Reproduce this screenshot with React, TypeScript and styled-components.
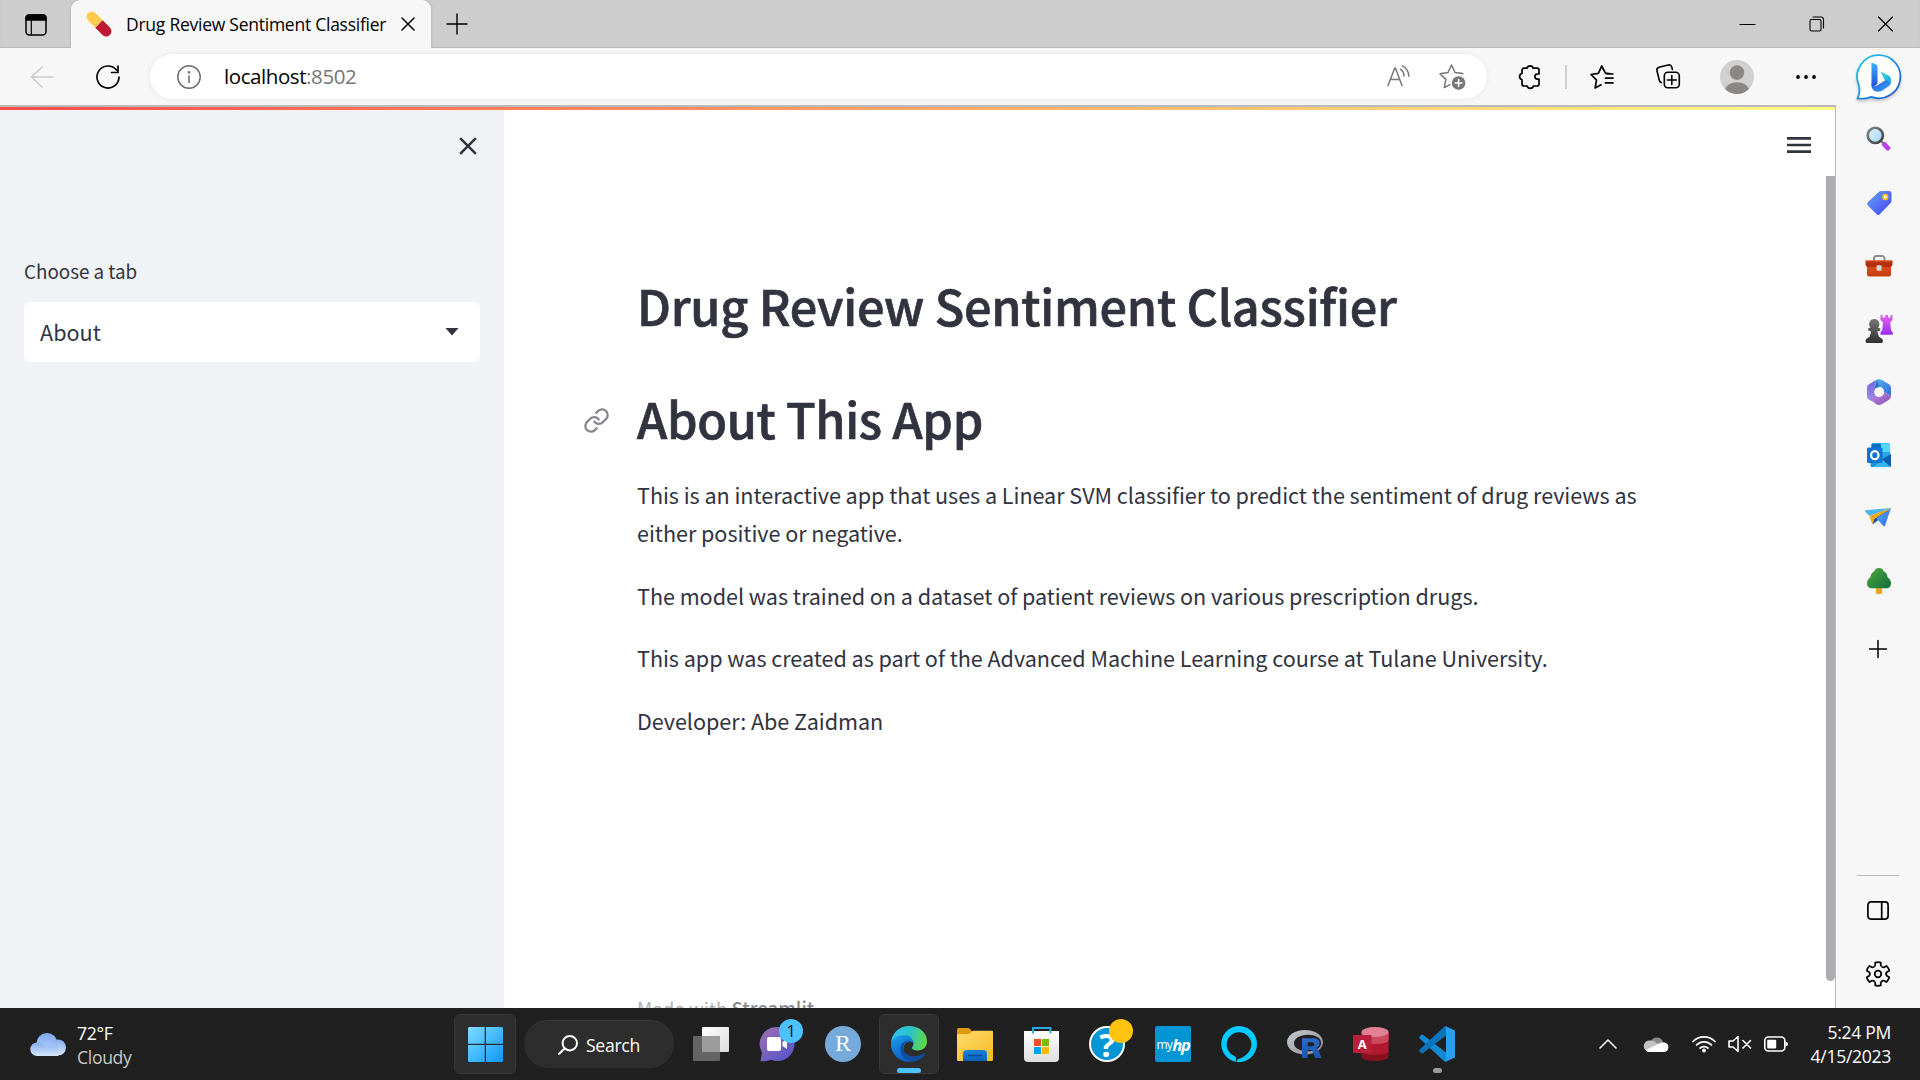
import React from "react";
import styled, { createGlobalStyle } from "styled-components";
import { MdClose, MdMenu } from "react-icons/md";
import { Link as LinkIcon } from "lucide-react";

const SANS = '"Noto Sans CJK JP", "Open Sans", sans-serif';
const UI = '"Open Sans", "Noto Sans", sans-serif';
const INK = "#31333f";

const Global = createGlobalStyle`
  * { box-sizing: border-box; }
  body { margin: 0; overflow: hidden; background: #fff; }
  h1, p { margin: 0; }
  svg { display: block; flex: none; overflow: visible; }
`;

const Screen = styled.div`
  width: 1920px; height: 1080px; display: flex; flex-direction: column;
  font-family: ${UI}; color: #000; overflow: hidden;
`;
const TabStrip = styled.header`
  height: 48px; background: #cdcdcd; display: flex; align-items: center;
  box-shadow: inset 0 -1px 1px #b9b9b9;
`;
const Workspaces = styled.div`
  width: 71px; padding: 1px 0 0 1px; display: flex; justify-content: center;
`;
const Tab = styled.div`
  width: 360px; height: 48px; background: #f7f7f7; border-radius: 9px 9px 0 0;
  display: flex; align-items: center; padding-left: 16px; box-shadow: 0 0 3px #aaa;
  clip-path: inset(0 -4px 0 -4px);
`;
const TabTitle = styled.span`
  width: 290px; flex: none; padding: 0 0 1px 15px; font-size: 17.5px; white-space: nowrap; letter-spacing: -0.25px;
`;
const NewTab = styled.div`margin: 0 0 1px 15px;`;
const WindowButtons = styled.div`
  margin-left: auto; display: flex; gap: 54px; padding-right: 27px;
`;
const Middle = styled.div`height: 960px; display: flex;`;
const Browser = styled.div`width: 1836px; display: flex; flex-direction: column;`;
const Toolbar = styled.div`
  height: 57px; background: #f7f7f7; display: grid; align-items: center; justify-items: center;
  grid-template-columns: 84px 48px 18px 1337px 78px 2px 70px 62px 76px 61px;
`;
const AddressBar = styled.div`
  grid-column: 4; width: 100%; height: 45px; border-radius: 23px; background: #fff;
  box-shadow: 0 0 5px #e4e4e4; display: flex; align-items: center; padding: 0 21px 0 27px;
`;
const Url = styled.span`
  margin-left: 23px; padding-bottom: 2px; font-size: 20.5px; letter-spacing: -0.42px; flex: 1;
  em { font-style: normal; color: #767676; }
`;
const Extensions = styled.div`padding-left: 6px;`;
const Divider = styled.i`width: 2px; height: 24px; background: #cfcfcf;`;
const ReadAloud = styled.div`margin: 0 29px 2px 0;`;

const Page = styled.div`
  flex: 1; display: flex; flex-direction: column; border-top: 2px solid #bababa;
  border-right: 1px solid #b9b9bb; background: #fff; overflow: hidden;
`;
const Decoration = styled.div`
  height: 3px; flex: none; background: linear-gradient(90deg, #ff4b4b, #fffd80);
`;
const AppView = styled.div`flex: 1; display: flex; min-height: 0;`;
const SideNav = styled.aside`
  width: 504px; background: #f0f2f6; padding: 21px 24px 0; font-family: ${SANS}; color: ${INK};
`;
const CloseRow = styled.div`
  display: flex; justify-content: flex-end; height: 129px; margin-right: -3px;
`;
const FieldLabel = styled.div`
  font-size: 18.8px; line-height: 21px; height: 42px; white-space: nowrap;
`;
const Select = styled.div`
  height: 60px; border-radius: 6px; background: #fff; display: flex; align-items: center;
  justify-content: space-between; padding: 0 21px 0 16px; font-size: 21.6px;
`;
const SelectValue = styled.span`padding-bottom: 2px;`;
const Main = styled.main`
  flex: 1; display: flex; color: ${INK}; font-family: ${SANS}; min-width: 0;
`;
const Column = styled.div`
  width: 1189px; padding: 163px 0 0 133px; display: flex; flex-direction: column; flex: none;
`;
const HeadingRow = styled.div`
  display: flex; align-items: center; margin-left: -54px; height: 65px; margin-bottom: 48px;
`;
const Anchor = styled.span`width: 54px; color: #85868c; padding-top: 3px;`;
const Heading = styled.h1<{ $ls: number }>`
  font-size: 48.6px; line-height: 65px; font-weight: 500; white-space: nowrap;
  -webkit-text-stroke: 0.7px ${INK}; letter-spacing: ${(p) => p.$ls}px;
`;
const Prose = styled.div`
  margin-top: -23px; display: flex; flex-direction: column; gap: 24px; font-size: 21.6px;
  line-height: 38.4px; width: 1030px; letter-spacing: -0.045px;
`;
const Footer = styled.footer`
  margin-top: 253px; font-size: 18.7px; line-height: 30px; color: #b0b1b5; white-space: nowrap;
  b { font-weight: 500; color: #8a8b92; }
`;
const MenuColumn = styled.div`
  flex: 1; display: flex; flex-direction: column; align-items: flex-end; justify-content: space-between;
  padding: 19px 0 27px;
`;
const MenuButton = styled.div`padding-right: 20px; height: 47px;`;
const ScrollThumb = styled.div`
  width: 9px; height: 805px; background: #adacb2; border-radius: 0 0 5px 5px;
`;

const Rail = styled.aside`
  width: 84px; background: #f7f7f7; display: flex; flex-direction: column; padding-bottom: 3px;
`;
const RailItem = styled.div<{ $h?: number; $shift?: number }>`
  height: ${(p) => p.$h ?? 63}px; flex: none; display: flex; align-items: center; justify-content: center;
  padding-left: ${(p) => p.$shift ?? 2}px;
`;
const RailGap = styled.div`height: 3px;`;
const RailRule = styled.div`
  margin: auto 21px 3px; height: 1px; background: #bcbcbc;
`;

const Taskbar = styled.footer`
  height: 72px; background: #202020; display: flex; align-items: center; color: #fff; font-size: 17.6px;
`;
const Weather = styled.div`
  width: 454px; padding: 1px 0 0 30px; display: flex; align-items: center; gap: 11px;
`;
const Lines = styled.div<{ $right?: boolean }>`
  line-height: 24px; letter-spacing: -0.32px; text-align: ${(p) => (p.$right ? "right" : "left")};
  span { display: block; white-space: nowrap; }
  .soft { color: #c8c8c8; }
`;
const StartButton = styled.div`
  width: 62px; height: 60px; border-radius: 6px; background: #2d2d2d; border: 1px solid #383838;
  display: flex; align-items: center; justify-content: center;
`;
const SearchPill = styled.div`
  width: 150px; height: 48px; margin: 0 4px 0 8px; border-radius: 24px; background: #2d2d2d;
  border-top: 1px solid #3a3a3a; display: flex; align-items: center; padding-left: 34px; gap: 8px;
  letter-spacing: -0.3px;
`;
const TaskSlot = styled.div<{ $active?: boolean }>`
  position: relative; width: 60px; height: 60px; margin: 0 3px; border-radius: 6px;
  display: flex; align-items: center; justify-content: center;
  background: ${(p) => (p.$active ? "#2d2d2d" : "none")};
  border: 1px solid ${(p) => (p.$active ? "#383838" : "transparent")};
`;
const RunMark = styled.i<{ $w: number; $c: string }>`
  position: absolute; bottom: 0; left: ${(p) => 29 - p.$w / 2}px; width: ${(p) => p.$w}px; height: 5px;
  border-radius: 3px; background: ${(p) => p.$c};
`;
const Badge = styled.b<{ $c: string }>`
  position: absolute; top: 4px; left: 31px; width: 24px; height: 24px; border-radius: 12px;
  background: ${(p) => p.$c}; color: #111; font-weight: 400; line-height: 24px; text-align: center; font-size: 17px;
`;
const RStudio = styled.div`
  width: 36px; height: 36px; border-radius: 18px; background: #75aadb; color: #fff;
  font: 24px/35px "Liberation Serif", serif; text-align: center;
`;
const HelpDisc = styled.div`
  width: 36px; height: 36px; border-radius: 18px; background: #0096d6; border: 2px solid #fff;
  font: 700 33px/33px "Open Sans", sans-serif; text-align: center;
`;
const MyHp = styled.div`
  width: 36px; height: 36px; border-radius: 2px; background: #0096d6; display: flex; justify-content: center;
  align-items: center; font-size: 12px; letter-spacing: -0.7px;
  b { font-size: 16.5px; font-style: italic; letter-spacing: -1.2px; }
`;
const Tray = styled.div`
  margin-left: auto; display: flex; align-items: center; padding-right: 29px;
`;
const TrayItem = styled.div<{ $ml: number }>`margin-left: ${(p) => p.$ml}px;`;
const Clock = styled.div`width: 80px; margin-left: 23px; display: flex; justify-content: flex-end;`;

type LineProps = { w: number; h: number; d: string; c?: string; s?: number };
const Stroke = ({ w, h, d, c = "#000", s = 1.5 }: LineProps) => (
  <svg width={w} height={h} viewBox={`0 0 ${w} ${h}`} fill="none" stroke={c} strokeWidth={s} strokeLinecap="round" strokeLinejoin="round">
    <path d={d} />
  </svg>
);

const WorkspaceIcon = () => (
  <svg width="22" height="22" viewBox="0 0 22 22" fill="none" stroke="#000" strokeWidth="1.5">
    <rect x="1" y="1" width="20" height="20" rx="3.5" />
    <path d="M1 6V4a3 3 0 0 1 3-3h14a3 3 0 0 1 3 3v2z" fill="#000" />
    <path d="M6.3 6v15" strokeWidth="1.2" />
  </svg>
);
const Pill = () => (
  <svg width="24" height="24" viewBox="0 0 24 24">
    <g transform="rotate(45 12 12)">
      <path d="M12 6.8H1.8a5.2 5.2 0 0 0 0 10.4H12z" fill="#ffcc4d" />
      <path d="M12 6.8h10.2a5.2 5.2 0 0 1 0 10.4H12z" fill="#be1931" />
    </g>
  </svg>
);
const InfoIcon = () => (
  <svg width="24" height="24" viewBox="0 0 24 24" fill="none" stroke="#6b6b6b" strokeWidth="1.5">
    <circle cx="12" cy="12" r="11.2" />
    <path d="M12 10.5V18" />
    <circle cx="12" cy="7.3" r=".6" fill="#6b6b6b" />
  </svg>
);
const ReadIcon = () => (
  <svg width="23" height="22" viewBox="0 0 23 22" fill="none" stroke="#767676" strokeWidth="1.5" strokeLinecap="round" strokeLinejoin="round">
    <path d="M1 20.5 7.8 3h.6l6.6 17.5M3.3 14.6h9.5M13.4 4.2a8 8 0 0 1 3.6 6.8M15.6.8a13 13 0 0 1 6.3 10.4" />
  </svg>
);
const StarAdd = () => (
  <svg width="27" height="26" viewBox="0 0 27 26" fill="none" stroke="#767676" strokeWidth="1.5" strokeLinejoin="round" strokeLinecap="round">
    <path d="M23.8 9.6 16 8.5 12.5 1 9 8.5 1 9.7l5.8 5.7-1.5 8.2 5.5-2.9" />
    <circle cx="19.6" cy="19" r="6.8" fill="#767676" stroke="none" />
    <path d="M19.6 15.6v6.8M16.2 19H23" stroke="#fff" />
  </svg>
);
const Puzzle = () => (
  <Stroke w={22} h={25} s={1.7} d="M6 4.200h3a3.200 3.200 0 0 1 6.200 0H19a2 2 0 0 1 2 2V10h-1.500a2.600 2.600 0 0 0 0 5.200H21V20a2 2 0 0 1-2 2h-3.600a3.200 3.200 0 0 1-6.200 0H6a2 2 0 0 1-2-2v-4.300a3.200 3.200 0 0 1 0-6.200V6.200a2 2 0 0 1 2-2Z" />
);
const FavLines = () => (
  <Stroke w={24} h={24} s={1.7} d="M22.5 9 15.5 8.2 11.7 1 8.4 8.4 1 9.5l5.5 5.6-1.4 7.9 6-3.2M15.5 13.200H23M15.5 17.900H23M17 9H22.8" />
);
const Collections = () => (
  <svg width="24" height="25" viewBox="0 0 24 25" fill="none" stroke="#000" strokeWidth="1.6" strokeLinecap="round">
    <path d="M5.3 18.6a3 3 0 0 1-2-2.4L1 7a3 3 0 0 1 2-3.7L12 1a3 3 0 0 1 3.8 2.2l.5 2.2" />
    <rect x="8.3" y="8.3" width="15" height="15.4" rx="3.5" />
    <path d="M15.8 11.5v9M11.3 16h9" />
  </svg>
);
const Avatar = () => (
  <svg width="34" height="34" viewBox="0 0 34 34">
    <circle cx="17" cy="17" r="17" fill="#d2d0ce" />
    <circle cx="17" cy="12.6" r="7.3" fill="#8a8886" />
    <path d="M5 29a12.5 9.4 0 0 1 24 0 17 17 0 0 1-24 0z" fill="#8a8886" />
  </svg>
);
const Dots = () => (
  <svg width="20" height="4" viewBox="0 0 20 4"><circle cx="2" cy="2" r="1.9" /><circle cx="10" cy="2" r="1.9" /><circle cx="18" cy="2" r="1.9" /></svg>
);

const Grad = ({ id, a, b, v }: { id: string; a: string; b: string; v?: boolean }) => (
  <linearGradient id={id} x1="0" y1="0" x2={v ? "0" : "1"} y2="1"><stop stopColor={a} /><stop offset="1" stopColor={b} /></linearGradient>
);

const BingShape = styled.path`filter: drop-shadow(0 2px 1.5px #0003);`;
const Bing = () => (
  <svg width="46" height="46" viewBox="0 0 46 46">
    <defs><Grad id="bo" a="#1fd0ee" b="#1b4fd8" /><Grad id="bb" a="#37b1ff" b="#2151e0" v /><Grad id="bc" a="#36e0d0" b="#1b9df0" /><Grad id="bd" a="#2151e0" b="#35a8f5" /></defs>
    <BingShape d="M23.5 1.2a21.5 21.5 0 1 1-8.2 41.6c-4 1.7-8.500 2-13.700 1.900 2-5 2.400-9 1.400-13A21.600 21.600 0 0 1 23.500 1.200z" fill="#fff" stroke="url(#bo)" strokeWidth="1.8" />
    <path d="M15.500 28v4.500c1 5 6 6.500 10.500 4.200l7-4.700c2.500-2 2.500-6-1-7.500L21 31.500c-2.500 1.500-5.500 1-5.500-3.500z" fill="url(#bd)" />
    <path d="M15.500 8.500 20 10.500c1.200.6 1.500 1.500 1.500 2.500v16.500c-2 2.500-4.500 3.500-6 2z" fill="url(#bb)" />
    <path d="M24.500 17.500l7 3.500c4 2 4.800 6 2.500 9.500-.3-2.500-1.500-3.300-5.500-4.700z" fill="url(#bc)" />
  </svg>
);
const Magnifier = () => (
  <svg width="25" height="27" viewBox="0 0 25 27">
    <defs><Grad id="mg" a="#8b8b8b" b="#3c3c3c" /><Grad id="ml" a="#e4f5ff" b="#9cd2f5" /></defs>
    <path d="m18.300 18.300 3.600 3.800" stroke="#c239f5" strokeWidth="4.800" strokeLinecap="round" />
    <path d="m14.500 14.500 3 3" stroke="#777" strokeWidth="2" />
    <circle cx="9.300" cy="9.400" r="7.600" fill="url(#ml)" stroke="url(#mg)" strokeWidth="2.600" />
  </svg>
);
const Tag = () => (
  <svg width="25" height="24" viewBox="0 0 25 24">
    <defs><Grad id="tg" a="#66a9f8" b="#413fef" /></defs>
    <path d="M12 .8C13 0 14 0 15 0h7a2.500 2.500 0 0 1 2.500 2.500V9c0 1.500-.3 2.500-1.300 3.500L13 23a2.500 2.500 0 0 1-3.600 0l-8.500-8.500a2.500 2.500 0 0 1 0-3.600z" fill="url(#tg)" />
    <circle cx="18.300" cy="6" r="2.300" fill="#fff" stroke="#f5c21b" strokeWidth="1.800" />
  </svg>
);
const Toolbox = () => (
  <svg width="28" height="22" viewBox="0 0 28 22">
    <defs><Grad id="tb" a="#e5571d" b="#c63d10" v /></defs>
    <path d="M9 6V3.500a2.500 2.500 0 0 1 2.500-2.500h5.500a2.500 2.500 0 0 1 2.500 2.500V6" fill="none" stroke="#8c8c8c" strokeWidth="2" />
    <rect x="2" y="6" width="24" height="15.500" rx="2" fill="url(#tb)" />
    <path d="M1.500 5.500h25a1 1 0 0 1 1 1V9c0 2-1 3-3 3h-21c-2 0-3-1-3-3V6.500a1 1 0 0 1 1-1z" fill="#b52e0e" />
    <path d="M.5 6h27" stroke="#e8651f" />
    <rect x="11.600" y="10.300" width="5" height="5.400" rx="1" fill="#d5d5d5" />
  </svg>
);
const Chess = () => (
  <svg width="28" height="28" viewBox="0 0 28 28">
    <defs><Grad id="cr" a="#e163ef" b="#9b2cf3" v /><Grad id="cp" a="#777" b="#303030" v /></defs>
    <path d="M15.500 0h2v2.500h2.700V0h2.800v2.500h2.500V0h2v5l-2.300 2.500.8 7.500 1.800 2.500v2.300H15.500v-2.300l1.700-2.500.8-7.500L15.500 5z" fill="url(#cr)" />
    <path d="M9.300 4a5 5 0 0 1 3.700 8.400l2.300 1.100v2.100l-3 1 1.500 5 3.200 2.200c1 .8 1.100 2.200.7 3.400-.2.600-.7.800-1.200.8H2c-.600 0-1-.2-1.200-.8-.4-1.200-.3-2.600.7-3.400l3.200-2.200 1.500-5-3-1v-2.100l2.300-1.100A5 5 0 0 1 9.300 4z" fill="url(#cp)" />
  </svg>
);
const M365 = () => (
  <svg width="24" height="26" viewBox="0 0 24 26">
    <defs><Grad id="ma" a="#58b4f0" b="#2f6ad8" /><Grad id="mb" a="#6f66dc" b="#a78be8" v /><Grad id="mc" a="#c08ae0" b="#8450b4" /></defs>
    <path d="M9 1 2 5.200Q0 6.500 0 9v8q0 2.500 2 3.800L6.500 23 12 18q-4-1-4-5V7q0-4 1-6z" fill="url(#mb)" />
    <path d="M10 .6Q12-.3 15 1l7 4.200Q24 6.500 24 9v8l-7-4q0-4-4-5L7.500 11V6q0-4 2.500-5.400z" fill="url(#ma)" />
    <path d="M10 .6 7.500 11 12 8.300z" fill="#1d4a9c" opacity=".6" />
    <path d="M6 22.500 9 25q3 1.800 6 0l7-4.200q2-1.300 2-3.800L17 13q0 4-5 5H5.500z" fill="url(#mc)" />
    <circle cx="12" cy="13" r="4.800" fill="#f7f7f7" />
  </svg>
);
const OutlookIcon = () => (
  <svg width="24" height="24" viewBox="0 0 24 24">
    <rect x="4.500" y="0" width="18.500" height="17" rx="1.500" fill="#28a8ea" />
    <path d="M13.500.5H23v8.500h-9.500z" fill="#50d9ff" /><path d="M4.500 1H14v5H4.500z" fill="#0a6fc2" />
    <path d="M3.500 10.500 13.700 17 24 10.500V22.500a1.500 1.500 0 0 1-1.500 1.500H5a1.500 1.500 0 0 1-1.500-1.500z" fill="#1c93dc" />
    <path d="M24 11v12.500L14 17z" fill="#125fa8" /><path d="m6 24 10-7 7 7z" fill="#35b8f1" />
    <rect x="0" y="4.500" width="15.500" height="15.500" rx="1.500" fill="#0c75d1" />
    <ellipse cx="7.800" cy="12.200" rx="3.700" ry="4" fill="none" stroke="#fff" strokeWidth="2.200" />
  </svg>
);
const DropIcon = () => (
  <svg width="26" height="19" viewBox="0 0 26 19">
    <defs><Grad id="dp" a="#5bb5f5" b="#2863e5" /></defs>
    <path d="M26 0 .5 2.300Q-.5 2.800.5 4l4 4z" fill="#49b5e8" />
    <path d="M26 0 9 11l-1.500 5.500L12 13z" fill="#174fae" />
    <path d="M26 0 11.500 10.500l7 7.500q1 .7 1.500-.5z" fill="url(#dp)" />
    <path d="M26 0 4.500 8l2.800 8.200 1.700-5z" fill="#f5a418" />
  </svg>
);
const Tree = () => (
  <svg width="24" height="26" viewBox="0 0 24 26">
    <defs><Grad id="tr" a="#4faa3c" b="#106e3c" /></defs>
    <path d="M9 18h6v6.500a1.500 1.500 0 0 1-1.500 1.500h-3A1.500 1.500 0 0 1 9 24.500z" fill="#f3a01c" />
    <path d="M12 0c2.500 0 4 1.200 4.500 3 2.500 1.500 4 3.500 4 6.200C23 10.800 24 13 24 15.500c0 3-2 4.800-4.500 4.800h-15C2 20.300 0 18.500 0 15.500 0 13 1 10.800 3.500 9.200c0-2.700 1.500-4.700 4-6.200C8 1.200 9.500 0 12 0z" fill="url(#tr)" />
  </svg>
);
const PanelIcon = () => (
  <svg width="22" height="19" viewBox="0 0 22 19" fill="none" stroke="#000" strokeWidth="1.700"><rect x=".9" y=".9" width="20.200" height="17.200" rx="3" /><path d="M14.700 1v17" /></svg>
);
const Gear = () => {
  const pts: string[] = [];
  for (let i = 0; i < 6; i++) {
    const at = (deg: number, r: number) => {
      const a = ((deg + i * 60 - 90) * Math.PI) / 180;
      return `${(13 + r * Math.cos(a)).toFixed(2)} ${(13 + r * Math.sin(a)).toFixed(2)}`;
    };
    pts.push(`${i ? "L" : "M"}${at(-14, 11.7)}Q${at(0, 12.2)} ${at(14, 11.7)}L${at(17, 9.3)}Q${at(30, 7)} ${at(43, 9.3)}`);
  }
  return (
    <svg width="26" height="26" viewBox="0 0 26 26" fill="none" stroke="#000" strokeWidth="1.700" strokeLinejoin="round">
      <path d={pts.join("") + "Z"} /><circle cx="13" cy="13" r="3.300" />
    </svg>
  );
};

const WeatherCloud = () => (
  <svg width="36" height="23" viewBox="0 0 36 23">
    <defs><Grad id="w1" a="#7fa8f0" b="#b9d4f8" v /><Grad id="w2" a="#86aef0" b="#d5e6fb" v /></defs>
    <circle cx="17" cy="10.500" r="10.500" fill="url(#w1)" />
    <circle cx="28" cy="14.500" r="8" fill="url(#w2)" />
    <path d="M7 9.500c4 0 7 2 9 5l12-2.500v11H7A6.700 6.700 0 0 1 7 9.500z" fill="url(#w2)" />
  </svg>
);
const Windows = () => (
  <svg width="35" height="35" viewBox="0 0 35 35">
    <defs><linearGradient id="wn" gradientUnits="userSpaceOnUse" x1="0" y1="0" x2="35" y2="35"><stop stopColor="#7fdcff" /><stop offset="1" stopColor="#0a98f8" /></linearGradient></defs>
    <path fill="url(#wn)" d="M1 0h15.700v16.700H0V1zM18 0h16l1 1v15.700H18zM0 18h16.700v17H1l-1-1zM18 18h17v16l-1 1H18z" />
  </svg>
);
const SearchGlass = () => <Stroke w={20} h={20} c="#fff" s={2} d="M19 8.200a7.200 7.200 0 1 1-14.400 0 7.200 7.200 0 0 1 14.400 0M6.500 13.500 1 19" />;
const TaskView = () => (
  <svg width="36" height="34" viewBox="0 0 36 34">
    <defs><Grad id="tv" a="#fff" b="#dcdcdc" /></defs>
    <rect x="9" y="0" width="27" height="25" rx="1" fill="url(#tv)" /><rect x="0" y="9" width="27" height="25" rx="1" fill="#646464" />
    <path d="M9 9h18v16H9z" fill="#9c9c9c" />
  </svg>
);
const Chat = () => (
  <svg width="34" height="35" viewBox="0 0 34 35">
    <defs><Grad id="ch" a="#a06fb0" b="#4f52cf" /></defs>
    <path d="M17 0a17 17 0 1 1-6 32.700C8 34 4 34.500.5 34.300L2 25.500A17 17 0 0 1 17 0z" fill="url(#ch)" />
    <rect x="7" y="10" width="14" height="14" rx="2" fill="#fff" /><path d="m22.500 15 4.500-3v10l-4.500-3z" fill="#fff" />
  </svg>
);
const Edge = () => (
  <svg width="36" height="36" viewBox="0 0 24 24">
    <defs>
      <linearGradient id="e1" x1="0" y1=".3" x2="1" y2=".5"><stop stopColor="#2fc0f2" /><stop offset=".5" stopColor="#2bc3c9" /><stop offset="1" stopColor="#62d943" /></linearGradient>
      <linearGradient id="e2" x1="0" y1="0" x2=".5" y2="1"><stop stopColor="#1aa0e8" /><stop offset="1" stopColor="#0a5dc8" /></linearGradient>
    </defs>
    <path d="M0 12C0 5 5.400 0 12 0c7 0 12 4.500 12 10.300 0 3.500-2.700 6-6 6-2.600 0-4-.8-4-1.700 0-.6 1-1.200 1-2.900 0-2.500-2.700-4.700-6-4.700C4 7 1 9 0 12z" fill="url(#e1)" />
    <path d="M0 12C.5 8.500 4 6.200 8.600 6.200c4.400 0 6.400 2.900 6.400 5.500-.4-1.900-5.700-2.500-6.600 3C7.500 20 13 23 15.600 23.400 7.500 25.500 0 20 0 12z" fill="url(#e2)" />
    <path d="M8.200 14.600c0 3.400 3.500 5.600 7.200 5.600 3 0 5.200-1 6.500-1.900.5-.3 1 .2.700.7-1 1.700-3.400 3.900-7 4.600C10 24 5.600 19.500 6.400 14.500c.5-3 2.600-4.700 5.100-4.700-2 1-3.300 2.900-3.300 4.800z" fill="#0f4fa0" />
  </svg>
);
const Folder = () => (
  <svg width="36" height="33" viewBox="0 0 36 33">
    <defs><Grad id="fo" a="#ffdc6b" b="#f6b826" /><Grad id="fb" a="#1583dd" b="#0a62b8" v /></defs>
    <path d="M1.500 0H11q1 0 2 1l2.500 2.500V10H0V1.500A1.500 1.500 0 0 1 1.500 0z" fill="#dd9a0c" />
    <path d="M0 6h11.500q1 0 2-1l1.500-1.500q.7-.7 1.700-.7H35a1 1 0 0 1 1 1V32a1 1 0 0 1-1 1H1a1 1 0 0 1-1-1z" fill="url(#fo)" />
    <path d="M6 33v-7a4 4 0 0 1 4-4h16a4 4 0 0 1 4 4v7z" fill="url(#fb)" /><path d="M11.500 27.500h13" stroke="#0b4c98" strokeWidth="1.500" strokeLinecap="round" />
  </svg>
);
const Store = () => (
  <svg width="35" height="35" viewBox="0 0 35 35">
    <defs><Grad id="st" a="#fff" b="#dedede" v /></defs>
    <path d="M0 4h35v27a4 4 0 0 1-4 4H4a4 4 0 0 1-4-4z" fill="url(#st)" />
    <path d="M9 6.500V1h17.500v5.500" fill="none" stroke="#2aa9e4" strokeWidth="2" />
    <path d="M10 12h7v7h-7z" fill="#f25022" /><path d="M18 12h7v7h-7z" fill="#7fba00" /><path d="M10 20h7v7h-7z" fill="#00a4ef" /><path d="M18 20h7v7h-7z" fill="#ffb900" />
  </svg>
);
const Alexa = () => (
  <svg width="36" height="36" viewBox="0 0 36 36">
    <path fillRule="evenodd" d="M18 0a18 18 0 1 1-3 35.750V32.400c0-1-.6-1.900-1.600-2.300A12.400 12.400 0 1 1 30.400 17.800C30.400 25 25 31 16.500 33.500L15 35.700A18 18 0 0 1 18 0z" fill="#00caff" />
  </svg>
);
const RLogo = () => (
  <svg width="36" height="29" viewBox="0 0 36 29">
    <defs><Grad id="rl" a="#c6c9ce" b="#8b8d95" /><Grad id="rb" a="#2a6cc8" b="#1b57ae" v /></defs>
    <path fillRule="evenodd" d="M18 0c10 0 18 5.400 18 12.200S28 24.500 18 24.500 0 19 0 12.200 8 0 18 0zm2.800 4.800C13 4.800 7 8.500 7 13.300s6 8 13.800 8 13.300-3.200 13.300-8.300c0-5.200-5.500-8.200-13.300-8.200z" fill="url(#rl)" />
    <path fillRule="evenodd" d="M15 8.300h12c4 0 5.700 2.500 5.700 5 0 2.300-1.500 4-3.700 4.600 1 .4 1.700 1.200 2.300 2.200l3.200 7.900h-6.200l-3-6.700q-.5-1.200-1.700-1.200h-2.900V28H15zm5.700 4v4h4.500q2 0 2-2t-2-2z" fill="url(#rb)" />
  </svg>
);
const Access = () => (
  <svg width="36" height="34" viewBox="0 0 36 34">
    <path d="M8.500 5v24.500c0 6 27 6 27 0V5z" fill="#87121f" /><path d="M8.500 5v19.500c0 4.500 27 4.500 27 0V5z" fill="#b0192f" /><path d="M8.500 5v8.500c0 4.500 27 4.500 27 0V5z" fill="#cb4a5e" />
    <ellipse cx="22" cy="5" rx="13.500" ry="5" fill="#e08194" />
    <rect x="0" y="8" width="18.500" height="18" rx="1" fill="#b8203a" />
    <text x="9.200" y="21.800" fill="#fff" fontFamily="Open Sans" fontWeight="700" fontSize="13" textAnchor="middle">A</text>
  </svg>
);
const VsCode = () => (
  <svg width="36" height="36" viewBox="0 0 36 36">
    <path d="M.5 10.500 2.200 9q1-.8 2 0L27 26.500V36h-1L.6 12.500q-.8-1-.1-2z" fill="#118bd4" />
    <path d="M.5 25.500 2.200 27q1 .8 2 0L27 9.500V0h-1L.6 23.500q-.8 1-.1 2z" fill="#0a73bb" />
    <path d="M26 0l9 4q1 .5 1 1.500v25q0 1-1 1.500l-9 4q1-.3 1-2V2q0-1.700-1-2z" fill="#27a0f0" />
  </svg>
);
const TrayCloud = () => (
  <svg width="24" height="16" viewBox="0 0 24 16">
    <path d="M7 5a6.500 6.500 0 0 1 12 1l-8 4z" fill="#8a8a8a" /><path d="M5.500 4.500C9 4 11 6 14 8l-9 7.500A5.500 5.500 0 0 1 5.500 4.500z" fill="#c2c2c2" />
    <path d="M2 14 15 7.500q3-2 5.500-1A4.800 4.800 0 0 1 19.500 16H5q-2 0-3-2z" fill="#fff" />
  </svg>
);
const Wifi = () => (
  <svg width="24" height="18" viewBox="0 0 24 18" fill="none" stroke="#fff" strokeWidth="1.700" strokeLinecap="round">
    <path d="M1 6.500a15.500 15.500 0 0 1 22 0M4.500 10a10.600 10.600 0 0 1 15 0M8 13.200a5.700 5.700 0 0 1 8 0" /><circle cx="12" cy="15.500" r="2" fill="#fff" stroke="none" />
  </svg>
);
const Muted = () => <Stroke w={24} h={18} c="#fff" s={1.6} d="M1 6v6h4l5 4.500v-15L5 6zM15 5.500l7.500 7.500M22.500 5.500 15 13" />;
const Battery = () => (
  <svg width="24" height="16" viewBox="0 0 24 16"><rect x=".8" y="1" width="20" height="14" rx="3.500" fill="none" stroke="#fff" strokeWidth="1.600" /><rect x="3.200" y="3.700" width="9" height="8.800" rx="1" fill="#fff" /><path d="M21.500 5.500q2.500.5 2.500 2.500t-2.500 2.500z" fill="#fff" /></svg>
);

export default function App() {
  return (
    <Screen>
      <Global />
      <TabStrip>
        <Workspaces><WorkspaceIcon /></Workspaces>
        <Tab>
          <Pill />
          <TabTitle>Drug Review Sentiment Classifier</TabTitle>
          <Stroke w={14} h={14} d="M1 1l12 12M13 1 1 13" />
        </Tab>
        <NewTab><Stroke w={22} h={22} d="M11 1v20M1 11h20" s={1.4} /></NewTab>
        <WindowButtons>
          <Stroke w={15} h={16} d="M0 8.500h15" s={1} />
          <Stroke w={15} h={16} d="M2.500 3.500h8a1.500 1.500 0 0 1 1.500 1.500v8.500a1.500 1.500 0 0 1-1.500 1.500h-8A1.500 1.500 0 0 1 1 13.500V5a1.500 1.500 0 0 1 1.500-1.500M4 1h8a2.500 2.500 0 0 1 2.500 2.500V12" s={1.1} />
          <Stroke w={15} h={16} d="M.5 1l14 14M14.500 1l-14 14" s={1.1} />
        </WindowButtons>
      </TabStrip>
      <Middle>
        <Browser>
          <Toolbar>
            <Stroke w={24} h={22} c="#cbcbcb" d="M12 1 1.500 11 12 21M1.500 11H23" />
            <Stroke w={24} h={24} s={1.7} d="M23 12A11 11 0 1 1 20.500 5M22 1v6.500h-6.500" />
            <AddressBar>
              <InfoIcon />
              <Url>localhost<em>:8502</em></Url>
              <ReadAloud><ReadIcon /></ReadAloud>
              <StarAdd />
            </AddressBar>
            <Extensions><Puzzle /></Extensions>
            <Divider />
            <FavLines />
            <Collections />
            <Avatar />
            <Dots />
          </Toolbar>
          <Page>
            <Decoration />
            <AppView>
              <SideNav>
                <CloseRow><MdClose size={30} /></CloseRow>
                <FieldLabel>Choose a tab</FieldLabel>
                <Select>
                  <SelectValue>About</SelectValue>
                  <svg width="14" height="8" viewBox="0 0 14 8"><path d="M.5 0h13L7 7.500z" fill={INK} /></svg>
                </Select>
              </SideNav>
              <Main>
                <Column>
                  <HeadingRow><Anchor /><Heading $ls={-0.27}>Drug Review Sentiment Classifier</Heading></HeadingRow>
                  <HeadingRow><Anchor><LinkIcon size={27} strokeWidth={2} /></Anchor><Heading $ls={-0.33}>About This App</Heading></HeadingRow>
                  <Prose>
                    <p>This is an interactive app that uses a Linear SVM classifier to predict the sentiment of drug reviews as either positive or negative.</p>
                    <p>The model was trained on a dataset of patient reviews on various prescription drugs.</p>
                    <p>This app was created as part of the Advanced Machine Learning course at Tulane University.</p>
                    <p>Developer: Abe Zaidman</p>
                  </Prose>
                  <Footer>Made with <b>Streamlit</b></Footer>
                </Column>
                <MenuColumn>
                  <MenuButton><MdMenu size={32} /></MenuButton>
                  <ScrollThumb />
                </MenuColumn>
              </Main>
            </AppView>
          </Page>
        </Browser>
        <Rail>
          <RailItem $h={57}><Bing /></RailItem>
          <RailGap />
          <RailItem $shift={0}><Magnifier /></RailItem>
          <RailItem><Tag /></RailItem>
          <RailItem><Toolbox /></RailItem>
          <RailItem><Chess /></RailItem>
          <RailItem><M365 /></RailItem>
          <RailItem><OutlookIcon /></RailItem>
          <RailItem $shift={0}><DropIcon /></RailItem>
          <RailItem><Tree /></RailItem>
          <RailItem $h={74} $shift={0}><Stroke w={18} h={18} d="M9 .5v17M.5 9h17" /></RailItem>
          <RailRule />
          <RailItem $shift={0}><PanelIcon /></RailItem>
          <RailItem $shift={0}><Gear /></RailItem>
        </Rail>
      </Middle>
      <Taskbar>
        <Weather>
          <WeatherCloud />
          <Lines><span>72°F</span><span className="soft">Cloudy</span></Lines>
        </Weather>
        <StartButton><Windows /></StartButton>
        <SearchPill><SearchGlass />Search</SearchPill>
        <TaskSlot><TaskView /></TaskSlot>
        <TaskSlot><Chat /><Badge $c="#4cc2ff">1</Badge></TaskSlot>
        <TaskSlot><RStudio>R</RStudio></TaskSlot>
        <TaskSlot $active><Edge /><RunMark $w={24} $c="#4cc2ff" /></TaskSlot>
        <TaskSlot><Folder /></TaskSlot>
        <TaskSlot><Store /></TaskSlot>
        <TaskSlot><HelpDisc>?</HelpDisc><Badge $c="#ffc20e" /></TaskSlot>
        <TaskSlot><MyHp>my<b>hp</b></MyHp></TaskSlot>
        <TaskSlot><Alexa /></TaskSlot>
        <TaskSlot><RLogo /></TaskSlot>
        <TaskSlot><Access /></TaskSlot>
        <TaskSlot><VsCode /><RunMark $w={9} $c="#9a9a9a" /></TaskSlot>
        <Tray>
          <Stroke w={18} h={10} c="#fff" d="M1 9l8-8 8 8" />
          <TrayItem $ml={27}><TrayCloud /></TrayItem>
          <TrayItem $ml={24}><Wifi /></TrayItem>
          <TrayItem $ml={12}><Muted /></TrayItem>
          <TrayItem $ml={12}><Battery /></TrayItem>
          <Clock><Lines $right><span>5:24 PM</span><span>4/15/2023</span></Lines></Clock>
        </Tray>
      </Taskbar>
    </Screen>
  );
}
